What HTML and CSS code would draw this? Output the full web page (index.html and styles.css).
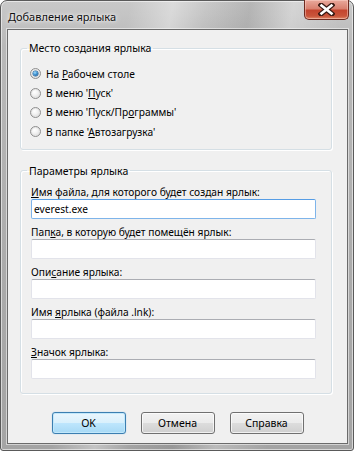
FILE: index.html
```html
<!DOCTYPE html>
<html lang="ru">
<head>
<meta charset="utf-8">
<title>Добавление ярлыка</title>
<link rel="stylesheet" href="styles.css">
</head>
<body>
<div class="window">
  <div class="titlebar">
    <span class="title">Добавление ярлыка</span>
    <button class="close" aria-label="Закрыть">
      <svg width="17" height="13" viewBox="0 0 17 13">
        <path d="M3 2 L14 11 M14 2 L3 11" stroke="#3a1a14" stroke-width="5" stroke-linecap="square"/>
        <path d="M3.5 2.5 L13.5 10.5 M13.5 2.5 L3.5 10.5" stroke="#ffffff" stroke-width="2.6" stroke-linecap="square"/>
      </svg>
    </button>
  </div>
  <div class="client">
    <fieldset class="group group-place">
      <legend>Место создания ярлыка</legend>
      <label class="radio-row"><span class="radio checked"></span><span>На <u>Р</u>абочем столе</span></label>
      <label class="radio-row"><span class="radio"></span><span>В меню '<u>П</u>уск'</span></label>
      <label class="radio-row"><span class="radio"></span><span>В меню 'Пуск/Пр<u>о</u>граммы'</span></label>
      <label class="radio-row"><span class="radio"></span><span>В папке '<u>А</u>втозагрузка'</span></label>
    </fieldset>
    <fieldset class="group group-params">
      <legend>Параметры ярлыка</legend>
      <div class="field">
        <div class="label"><u>И</u>мя файла, для которого будет создан ярлык:</div>
        <div class="input focused">everest.exe</div>
      </div>
      <div class="field">
        <div class="label">Пап<u>к</u>а, в которую будет помещён ярлык:</div>
        <div class="input"></div>
      </div>
      <div class="field">
        <div class="label">Опи<u>с</u>ание ярлыка:</div>
        <div class="input"></div>
      </div>
      <div class="field">
        <div class="label">Имя <u>я</u>рлыка (файла .lnk):</div>
        <div class="input"></div>
      </div>
      <div class="field">
        <div class="label"><u>З</u>начок ярлыка:</div>
        <div class="input"></div>
      </div>
    </fieldset>
    <div class="buttons">
      <button class="btn default">OK</button>
      <button class="btn">Отмена</button>
      <button class="btn">Справка</button>
    </div>
  </div>
</div>
</body>
</html>
```

FILE: styles.css
```css
html, body {
  margin: 0;
  padding: 0;
  background: #ffffff;
}
body {
  font-family: "Noto Sans", "Open Sans", sans-serif;
  font-size: 10.2px;
  color: #000;
}
.window {
  width: 354px;
  height: 451px;
  box-sizing: border-box;
  border: 1px solid #5a5a5a;
  border-radius: 7px 7px 3px 3px;
  background:
    linear-gradient(100deg, rgba(255,255,255,0) 30%, rgba(255,255,255,0.35) 40%, rgba(255,255,255,0) 48%, rgba(80,80,80,0.15) 58%, rgba(255,255,255,0.25) 68%, rgba(255,255,255,0) 80%),
    linear-gradient(to bottom, #c9c9c9, #b9b9b9 10%, #ababab 60%, #a4a4a4);
  box-shadow: inset 0 0 0 1px rgba(255,255,255,0.55);
  display: flex;
  flex-direction: column;
  padding: 0 5px 6px 6px;
}
.titlebar {
  height: 28px;
  display: flex;
  align-items: flex-start;
  justify-content: space-between;
}
.title {
  margin-top: 8px;
  margin-left: 1px;
  font-size: 11px;
  line-height: 15px;
  color: #111;
  text-shadow: 0 0 6px rgba(255,255,255,0.9), 0 0 3px rgba(255,255,255,0.9);
}
.close {
  width: 45px;
  height: 20px;
  margin-top: -1px;
  margin-right: -1px;
  padding: 0;
  border: 1px solid #6e2a20;
  border-top: none;
  border-radius: 0 0 5px 5px;
  background: linear-gradient(to bottom, #e9a99c 0%, #d98170 45%, #c4452f 55%, #c9553b 85%, #e08a6a 100%);
  box-shadow: inset 0 0 0 1px rgba(255,220,210,0.45);
  display: flex;
  align-items: center;
  justify-content: center;
}
.close svg { display: block; }
.client {
  flex: 1;
  background: #f0f0f0;
  border: 1px solid #6b6b6b;
  box-shadow: 0 0 0 1px rgba(255,255,255,0.5);
  padding: 11px 15px 0 12px;
  display: flex;
  flex-direction: column;
}
.group {
  margin: 0;
  border: 1px solid #d5dfe5;
  border-radius: 3px;
  box-shadow: inset 1px 1px 0 #fff, 1px 1px 0 #fff;
  min-width: 0;
}
.group legend {
  padding: 0 2px;
  margin-left: -4px;
  line-height: 14px;
  font-size: 10.5px;
  color: #000;
}
.group-place {
  padding: 9px 10px 7px 10px;
}
.radio-row {
  display: flex;
  align-items: center;
  height: 19.4px;
  gap: 5px;
}
.radio {
  width: 9px;
  height: 9px;
  border-radius: 50%;
  border: 1px solid #8f8f8f;
  background: radial-gradient(circle at 40% 35%, #ffffff 0%, #f2f2f2 40%, #cfcfcf 100%);
  box-shadow: inset 0 0 0 1px #e6e6e6;
  display: flex;
  align-items: center;
  justify-content: center;
  flex: none;
  margin-left: -1px;
}
.radio.checked::after {
  content: "";
  width: 5px;
  height: 5px;
  border-radius: 50%;
  background: radial-gradient(circle at 40% 35%, #a6e0ff 0%, #3b8fcf 45%, #1b4f84 100%);
  box-shadow: 0 0 0 0.5px #2a5f90;
}
.group-params {
  margin-top: 14px;
  padding: 7px 15px 14px 10px;
}
.field + .field {
  margin-top: 6px;
}
.label {
  line-height: 14px;
  white-space: nowrap;
}
.input {
  height: 20px;
  box-sizing: border-box;
  background: #fff;
  border: 1px solid #e2e3ea;
  border-top-color: #abadb3;
  border-radius: 2px;
  padding: 0 2px;
  line-height: 18px;
}
.input.focused {
  border-color: #7eb4ea;
  border-top-color: #569de5;
}
.buttons {
  display: flex;
  justify-content: center;
  gap: 15px;
  margin-top: 18px;
  padding-left: 3px;
}
.btn {
  width: 74px;
  height: 22px;
  padding: 0;
  font: inherit;
  font-size: 10.5px;
  color: #000;
  border: 1px solid #707070;
  border-radius: 3px;
  background: linear-gradient(to bottom, #f2f2f2 0%, #ebebeb 49%, #dddddd 50%, #cfcfcf 100%);
  box-shadow: inset 0 0 0 1px rgba(255,255,255,0.7);
}
.btn.default {
  border-color: #3c7fb1;
  background: linear-gradient(to bottom, #eaf6fd 0%, #d9f0fc 49%, #bee6fd 50%, #a7d9f5 100%);
  box-shadow: inset 0 0 0 1px #c2e8fb, 0 0 1px #6fb6e6;
}
```
